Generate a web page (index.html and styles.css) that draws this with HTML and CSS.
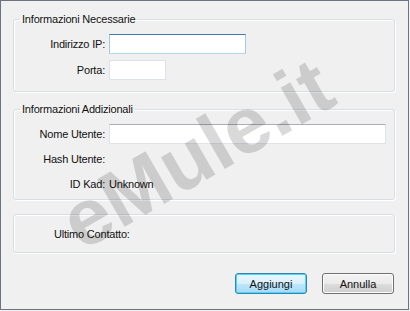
FILE: index.html
```html
<!DOCTYPE html>
<html lang="it">
<head>
  <meta charset="UTF-8">
  <title>Aggiungi contatto</title>
  <link rel="stylesheet" href="styles.css">
</head>
<body>
  <div class="dialog">
    <fieldset class="group group-first">
      <legend>Informazioni Necessarie</legend>
      <div class="rows">
        <label class="label" for="ip">Indirizzo IP:</label>
        <input class="edit edit-focus edit-ip" id="ip" type="text">
        <label class="label" for="port">Porta:</label>
        <input class="edit edit-light edit-port" id="port" type="text">
      </div>
    </fieldset>

    <fieldset class="group group-second">
      <legend>Informazioni Addizionali</legend>
      <div class="rows">
        <label class="label" for="user">Nome Utente:</label>
        <input class="edit edit-user" id="user" type="text">
        <span class="label">Hash Utente:</span>
        <span class="value"></span>
        <span class="label">ID Kad:</span>
        <span class="value">Unknown</span>
      </div>
    </fieldset>

    <div class="group group-third">
      <span class="last-seen">Ultimo Contatto:</span>
    </div>

    <div class="buttons">
      <button class="btn btn-default">Aggiungi</button>
      <button class="btn">Annulla</button>
    </div>

    <div class="watermark">eMule.it</div>
  </div>
</body>
</html>
```

FILE: styles.css
```css
body {
  margin: 0;
  background: #f0f0f0;
  font-family: 'Liberation Sans', Arial, sans-serif;
  font-size: 11px;
  letter-spacing: -0.2px;
  color: #111;
}
.dialog {
  position: relative;
  width: 409px;
  height: 310px;
  box-sizing: border-box;
  border: 1px solid #6b7480;
  background: #f0f0f0;
  padding: 0 13px 0 12px;
  overflow: hidden;
}
.group {
  margin: 0;
  padding: 0;
  border: 1px solid #d5dfe5;
  border-radius: 3px;
  box-shadow: inset 1px 1px 0 #fff, 1px 1px 0 #fff;
  min-width: 0;
}
.group legend {
  margin-left: 6px;
  padding: 0 2px;
  line-height: 13px;
  height: 13px;
}
.group-first {
  margin-top: 12px;
  height: 79px;
  box-sizing: border-box;
}
.group-second {
  margin-top: 11px;
  height: 97px;
  box-sizing: border-box;
}
.group-third {
  margin-top: 14px;
  height: 39px;
  box-sizing: border-box;
  display: flex;
  align-items: center;
}
.rows {
  display: grid;
  grid-template-columns: 91px auto;
  column-gap: 4px;
  align-items: center;
  justify-items: start;
}
.group-first .rows {
  margin-top: 8px;
  row-gap: 6px;
}
.group-second .rows {
  margin-top: 8px;
  row-gap: 5px;
}
.label {
  justify-self: end;
  line-height: 20px;
}
.value {
  line-height: 20px;
}
.edit {
  height: 20px;
  box-sizing: border-box;
  margin: 0;
  padding: 0 3px;
  border: 1px solid #e2e3ea;
  border-top-color: #abadb3;
  background: #fff;
  font: inherit;
  outline: none;
}
.edit-ip {
  width: 137px;
}
.edit-port {
  width: 57px;
}
.edit-user {
  width: 277px;
}
.edit-focus {
  border-color: #a4c9e3;
  border-top-color: #3d7bad;
  border-bottom-color: #b7d9ed;
}
.edit-light {
  border-color: #dde2e8;
}
.last-seen {
  margin-left: 40px;
  margin-top: 1px;
}
.buttons {
  display: flex;
  justify-content: flex-end;
  gap: 15px;
  margin-top: 20px;
  padding-right: 1px;
}
.btn {
  width: 72px;
  height: 21px;
  margin: 0;
  padding: 0;
  border: 1px solid #707070;
  border-radius: 3px;
  background: linear-gradient(#f2f2f2 0%, #ebebeb 50%, #dddddd 51%, #cfcfcf 100%);
  box-shadow: inset 0 0 0 1px #fcfcfc;
  font: inherit;
  color: #111;
}
.btn-default {
  border-color: #3c7fb1;
  background: linear-gradient(#eaf6fd 0%, #d9f0fc 50%, #bee6fd 51%, #a7d9f5 100%);
  box-shadow: inset 0 0 0 1px #48d8fb;
}
/* watermark sits over the whole dialog */
.watermark {
  position: absolute;
  left: 87px;
  top: 182px;
  height: 80px;
  font-family: 'Liberation Sans', Arial, sans-serif;
  font-weight: 700;
  font-size: 80px;
  letter-spacing: 0;
  color: rgba(0, 0, 0, 0.15);
  transform: rotate(-30deg);
  transform-origin: 0 100%;
  pointer-events: none;
  white-space: nowrap;
  line-height: 1;
}
```
